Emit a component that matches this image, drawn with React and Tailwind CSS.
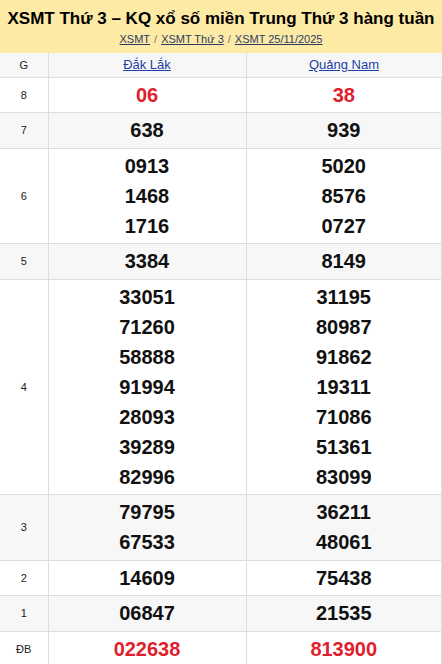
// Kết quả xổ số miền Trung - Thứ 3
import React from 'react';

const rows = [
  { label: '8', a: ['06'], b: ['38'], red: true },
  { label: '7', a: ['638'], b: ['939'] },
  { label: '6', a: ['0913', '1468', '1716'], b: ['5020', '8576', '0727'] },
  { label: '5', a: ['3384'], b: ['8149'] },
  {
    label: '4',
    a: ['33051', '71260', '58888', '91994', '28093', '39289', '82996'],
    b: ['31195', '80987', '91862', '19311', '71086', '51361', '83099'],
  },
  { label: '3', a: ['79795', '67533'], b: ['36211', '48061'] },
  { label: '2', a: ['14609'], b: ['75438'] },
  { label: '1', a: ['06847'], b: ['21535'] },
  { label: 'ĐB', a: ['022638'], b: ['813900'], red: true },
];

function Numbers({ items, red }) {
  return (
    <td className="border border-[#dddddd] py-[2.25px] text-center align-middle">
      {items.map((n) => (
        <div
          key={n}
          className={`text-[20px] font-bold leading-[30px] ${red ? 'text-[#df1f2d]' : 'text-[#111]'}`}
        >
          {n}
        </div>
      ))}
    </td>
  );
}

export default function App() {
  return (
    <div className="w-[442px] min-h-[664px] bg-white font-['Liberation_Sans',Arial,sans-serif]">
      {/* Title bar */}
      <div className="bg-[#fdeaa4] h-[53px] flex flex-col items-center pt-[8px]">
        <h1 className="text-[17px] font-bold text-black leading-[22px]">
          XSMT Thứ 3 – KQ xổ số miền Trung Thứ 3 hàng tuần
        </h1>
        <div className="mt-[2px] text-[11px] leading-[14px] text-[#2c3a66] flex items-center gap-[4px]">
          <a className="underline">XSMT</a>
          <span className="text-[#777]">/</span>
          <a className="underline">XSMT Thứ 3</a>
          <span className="text-[#777]">/</span>
          <a className="underline">XSMT 25/11/2025</a>
        </div>
      </div>

      <table className="w-[442px] border-collapse table-fixed">
        <colgroup>
          <col className="w-[48px]" />
          <col className="w-[198px]" />
          <col />
        </colgroup>
        <thead>
          <tr className="bg-[#f7f7f7] h-[24px]">
            <th className="border border-[#dddddd] border-t-0 border-l-0 text-[11px] font-normal text-[#222]">G</th>
            <th className="border border-[#dddddd] border-t-0 text-[13px] font-normal">
              <a className="underline text-[#1c3fa8]">Đắk Lắk</a>
            </th>
            <th className="border border-[#dddddd] border-t-0 border-r-0 text-[13px] font-normal">
              <a className="underline text-[#1c3fa8]">Quảng Nam</a>
            </th>
          </tr>
        </thead>
        <tbody>
          {rows.map((r, i) => (
            <tr key={r.label} className={i % 2 === 1 ? 'bg-[#f7f7f7]' : 'bg-white'}>
              <td className="border border-[#dddddd] border-l-0 text-center text-[11px] text-[#222] align-middle">
                {r.label}
              </td>
              <Numbers items={r.a} red={r.red} />
              <Numbers items={r.b} red={r.red} />
            </tr>
          ))}
        </tbody>
      </table>
    </div>
  );
}
